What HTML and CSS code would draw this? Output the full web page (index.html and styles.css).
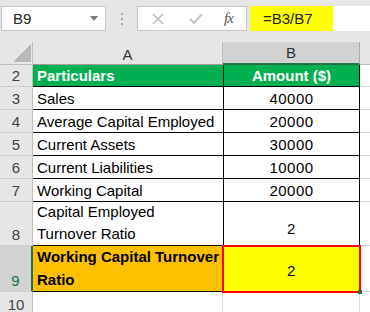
FILE: index.html
```html
<!DOCTYPE html>
<html>
<head>
<meta charset="utf-8">
<link rel="stylesheet" href="styles.css">
</head>
<body>
<div class="app">
  <div class="toolbar">
    <div class="namebox">
      <span class="nb-text">B9</span>
      <svg class="dd" width="8" height="5" viewBox="0 0 8 5"><path d="M0 0H8L4 5Z" fill="#7a7a7a"/></svg>
    </div>
    <div class="grip"><i></i><i></i><i></i></div>
    <div class="fxbox">
      <svg class="ic-x" width="12" height="12" viewBox="0 0 12 12"><path d="M1 1L11 11M11 1L1 11" stroke="#bdbdbd" stroke-width="1.5" fill="none"/></svg>
      <svg class="ic-ok" width="14" height="11" viewBox="0 0 14 11"><path d="M1 6L5 10L13 1" stroke="#c4c4c4" stroke-width="2" fill="none"/></svg>
      <span class="fx">fx</span>
    </div>
    <div class="formula"><span class="ftext">=B3/B7</span></div>
  </div>
  <div class="sheet">
    <div class="corner"><svg width="18" height="18" viewBox="0 0 18 18"><path d="M18 0V18H0Z" fill="#b9b9b9"/></svg></div>
    <div class="ch cha">A</div>
    <div class="ch chb">B</div>
    <div class="ch chx"></div>

    <div class="rh">2</div>
    <div class="c ca hdr">Particulars</div>
    <div class="c cb hdr">Amount ($)</div>
    <div class="cx"></div>

    <div class="rh">3</div>
    <div class="c ca">Sales</div>
    <div class="c cb num">40000</div>
    <div class="cx"></div>

    <div class="rh">4</div>
    <div class="c ca">Average Capital Employed</div>
    <div class="c cb num">20000</div>
    <div class="cx"></div>

    <div class="rh">5</div>
    <div class="c ca">Current Assets</div>
    <div class="c cb num">30000</div>
    <div class="cx"></div>

    <div class="rh">6</div>
    <div class="c ca">Current Liabilities</div>
    <div class="c cb num">10000</div>
    <div class="cx"></div>

    <div class="rh">7</div>
    <div class="c ca">Working Capital</div>
    <div class="c cb num">20000</div>
    <div class="cx"></div>

    <div class="rh">8</div>
    <div class="c ca wrap">Capital Employed<br>Turnover Ratio</div>
    <div class="c cb num b8">2</div>
    <div class="cx"></div>

    <div class="rh rh-sel">9</div>
    <div class="c ca wrap a9">Working Capital Turnover<br>Ratio</div>
    <div class="c cb num b9">2</div>
    <div class="cx"></div>

    <div class="rh rh-last">10</div>
    <div class="e ea"></div>
    <div class="e eb"></div>
    <div class="cx"></div>
  </div>
</div>
</body>
</html>
```

FILE: styles.css
```css
* { box-sizing: border-box; }
html, body { margin: 0; padding: 0; }
body {
  width: 370px;
  height: 312px;
  overflow: hidden;
  background: #ffffff;
  font-family: "Liberation Sans", Arial, sans-serif;
  font-size: 15px;
  color: #000;
}
.app { width: 370px; height: 312px; overflow: hidden; }

.toolbar {
  height: 42px;
  background: #e6e6e6;
  display: flex;
  align-items: flex-start;
  padding-top: 6px;
}
.namebox {
  width: 105px;
  height: 25px;
  margin-left: 1px;
  background: #fff;
  border: 1px solid #c6c6c6;
  display: flex;
  align-items: center;
  justify-content: space-between;
  padding: 0 7px 0 11px;
}
.nb-text { font-size: 15px; color: #222; }
.grip {
  width: 31px;
  height: 25px;
  display: flex;
  flex-direction: column;
  align-items: center;
  justify-content: center;
  gap: 3px;
}
.grip i {
  display: block;
  width: 2px;
  height: 2px;
  background: #a8a8a8;
}
.fxbox {
  width: 110px;
  height: 25px;
  background: #fff;
  border: 1px solid #c6c6c6;
  display: flex;
  align-items: center;
  padding-left: 14px;
}
.ic-x { margin-right: 25px; }
.ic-ok { margin-right: 21px; }
.fx {
  font-family: "Liberation Serif", "Times New Roman", serif;
  font-style: italic;
  font-size: 15px;
  color: #555;
  letter-spacing: -1px;
}
.formula {
  margin-left: 3px;
  flex: 1;
  height: 25px;
  background: #fff;
  display: flex;
  align-items: stretch;
}
.ftext {
  background: #ffff00;
  width: 83px;
  padding-left: 13px;
  display: flex;
  align-items: center;
  color: #222;
  font-size: 15px;
}

.sheet {
  display: grid;
  grid-template-columns: 33px 190px 137px 10px;
  grid-template-rows: 23px 22px 23px 23px 23px 23px 23px 44px 46px 22px;
}
.corner {
  background: #e6e6e6;
  border-right: 1px solid #bfbfbf;
  border-bottom: 1px solid #bfbfbf;
  display: flex;
  align-items: flex-end;
  justify-content: flex-end;
  padding: 0 1px 2px 0;
}
.corner svg { display: block; }
.ch {
  background: #e6e6e6;
  color: #333;
  display: flex;
  align-items: center;
  justify-content: center;
  font-size: 15px;
}
.cha { border-right: 1px solid #bfbfbf; border-bottom: 1px solid #9e9e9e; padding-top: 2px; }
.chb { background: #d2d2d2; border-bottom: 2px solid #217346; border-right: 1px solid #ababab; }
.chx { border-bottom: 1px solid #bfbfbf; }

.rh {
  background: #e6e6e6;
  border-right: 1px solid #bfbfbf;
  border-bottom: 1px solid #d0d0d0;
  color: #444;
  display: flex;
  align-items: flex-end;
  justify-content: center;
  line-height: 20px;
}
.rh-sel {
  background: #d2d2d2;
  color: #217346;
  border-right: 2px solid #217346;
}
.rh-last {
  align-items: flex-start;
  padding-top: 3px;
}

.c {
  border-bottom: 1px solid #000;
  display: flex;
  align-items: flex-end;
  line-height: 20px;
  white-space: nowrap;
}
.ca { padding-left: 4px; }
.cb {
  border-left: 1px solid #000;
  border-right: 1px solid #000;
  justify-content: center;
}
.num { letter-spacing: 0.5px; }
.hdr {
  background: #00b050;
  color: #fff;
  font-weight: bold;
}
.wrap { line-height: 22px; }
.a9 {
  background: #ffc000;
  font-weight: bold;
  line-height: 23px;
}
.b8 { padding-bottom: 6px; }
.b9 {
  position: relative;
  background: #ffff00;
  outline: 2px solid #ff0000;
  outline-offset: -1px;
  padding-bottom: 10px;
}
.b9::after {
  content: "";
  position: absolute;
  right: -3px;
  bottom: -3px;
  width: 4px;
  height: 4px;
  background: #217346;
}
.e { border-bottom: 1px solid #dadada; }
.ea { border-right: 1px solid #dadada; }
.eb { border-right: 1px solid #dadada; }
.cx { border-bottom: 1px solid #dadada; }
```
